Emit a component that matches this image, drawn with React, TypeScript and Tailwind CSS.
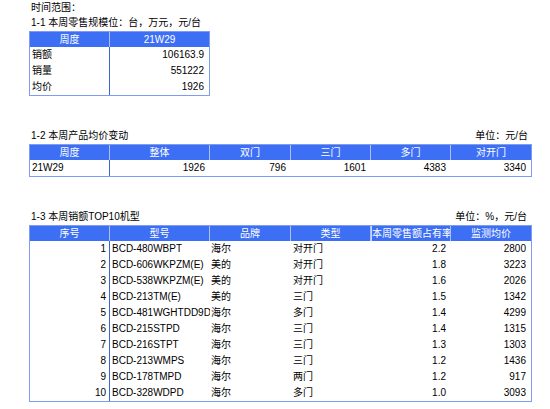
import React from "react";

const HEAD = "bg-[#3d6ff5] text-white text-center";
const hdiv = "border-r border-r-[#a9c0fa]";
const bdiv = "border-r border-r-[#3d62d8]";

const top10 = [
  [1, "BCD-480WBPT", "海尔", "对开门", "2.2", "2800"],
  [2, "BCD-606WKPZM(E)", "美的", "对开门", "1.8", "3223"],
  [3, "BCD-538WKPZM(E)", "美的", "对开门", "1.6", "2026"],
  [4, "BCD-213TM(E)", "美的", "三门", "1.5", "1342"],
  [5, "BCD-481WGHTDD9DY", "海尔", "多门", "1.4", "4299"],
  [6, "BCD-215STPD", "海尔", "三门", "1.4", "1315"],
  [7, "BCD-216STPT", "海尔", "三门", "1.3", "1303"],
  [8, "BCD-213WMPS", "海尔", "三门", "1.2", "1436"],
  [9, "BCD-178TMPD", "海尔", "两门", "1.2", "917"],
  [10, "BCD-328WDPD", "海尔", "多门", "1.0", "3093"],
];

const cols = "grid grid-cols-[80px_100px_81px_80px_80px_80px]";

export default function App() {
  return (
    <div
      className="w-[550px] h-[409px] bg-white text-black text-[10px] overflow-hidden"
      style={{ fontFamily: '"Liberation Sans", "Noto Sans CJK SC", sans-serif' }}
    >
      <div className="pl-[31px] leading-[15px]">时间范围：</div>
      <div className="pl-[31px] leading-[16px]">1-1 本周零售规模位：台，万元，元/台</div>

      {/* 1-1 */}
      <div className="ml-[29px] w-[181px] border border-[#7d9cf2] leading-[16px]">
        <div className="grid grid-cols-[80px_99px] h-[15px] leading-[15px]">
          <div className={`${HEAD} ${hdiv}`}>周度</div>
          <div className={HEAD}>21W29</div>
        </div>
        {[["销额", "106163.9"], ["销量", "551222"], ["均价", "1926"]].map(([k, v]) => (
          <div key={k} className="grid grid-cols-[80px_99px] h-[16px]">
            <div className={`pl-[2px] ${bdiv}`}>{k}</div>
            <div className="text-right pr-[5px]">{v}</div>
          </div>
        ))}
      </div>

      {/* 1-2 */}
      <div className="ml-[29px] w-[503px] mt-[32px]">
        <div className="flex justify-between leading-[16px] pl-[2px] pr-[4px]">
          <span>1-2 本周产品均价变动</span>
          <span>单位：元/台</span>
        </div>
        <div className="border border-[#7d9cf2] leading-[16px]">
          <div className={`${cols} h-[15px] leading-[15px]`}>
            {["周度", "整体", "双门", "三门", "多门", "对开门"].map((h, i) => (
              <div key={h} className={`${HEAD} ${i < 5 ? hdiv : ""}`}>{h}</div>
            ))}
          </div>
          <div className={`${cols} h-[16px]`}>
            <div className={`pl-[2px] ${bdiv}`}>21W29</div>
            {["1926", "796", "1601", "4383", "3340"].map((v, i) => (
              <div key={i} className="text-right pr-[5px]">{v}</div>
            ))}
          </div>
        </div>
      </div>

      {/* 1-3 */}
      <div className="ml-[29px] w-[503px] mt-[32px]">
        <div className="flex justify-between leading-[16px] pl-[2px] pr-[5px]">
          <span>1-3 本周销额TOP10机型</span>
          <span>单位：%，元/台</span>
        </div>
        <div className="border border-[#7d9cf2] leading-[16px]">
          <div className={`${cols} h-[15px] leading-[15px]`}>
            {["序号", "型号", "品牌", "类型", "本周零售额占有率", "监测均价"].map((h, i) => (
              <div
                key={h}
                className={`${HEAD} overflow-hidden whitespace-nowrap ${i < 5 ? hdiv : ""} ${i === 4 ? "border-l border-l-[#c9d7fc]" : ""}`}
              >
                {h}
              </div>
            ))}
          </div>
          {top10.map((r) => (
            <div key={r[0]} className={`${cols} h-[16px]`}>
              <div className={`text-right pr-[3px] ${bdiv}`}>{r[0]}</div>
              <div className="pl-[2px] overflow-hidden whitespace-nowrap">{r[1]}</div>
              <div className="pl-[1px]">{r[2]}</div>
              <div className="pl-[2px]">{r[3]}</div>
              <div className="text-right pr-[5px]">{r[4]}</div>
              <div className="text-right pr-[5px]">{r[5]}</div>
            </div>
          ))}
        </div>
      </div>
    </div>
  );
}
